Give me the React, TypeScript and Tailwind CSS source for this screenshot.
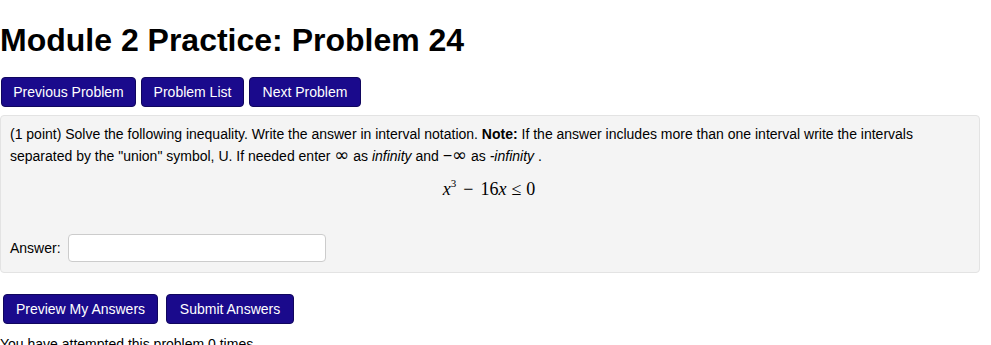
import React from "react";

const btn =
  "bg-[#1a0a8c] text-white border border-[#10065e] rounded-[4px] text-[14px] leading-none h-[30px] flex items-center justify-center";

const inf = "font-['DejaVu_Sans',sans-serif] text-[18px] leading-[0] font-normal";

export default function App() {
  return (
    <div className="w-[991px] h-[345px] overflow-hidden bg-white text-black font-['Liberation_Sans',Arial,sans-serif]">
      <h1 className="text-[32px] font-bold leading-none pt-[24px] pl-0">
        Module 2 Practice: Problem 24
      </h1>
      <div className="flex gap-[5px] mt-[21px] pl-[1px]">
        <button className={`${btn} w-[135px]`}>Previous Problem</button>
        <button className={`${btn} w-[103px]`}>Problem List</button>
        <button className={`${btn} w-[112px]`}>Next Problem</button>
      </div>
      <div className="mt-[8px] w-[980px] h-[158px] bg-[#f4f4f4] border border-[#e3e3e3] rounded-[4px] px-[9px] pt-[7px]">
        <p className="text-[14px] leading-[22px]">
          (1 point) Solve the following inequality. Write the answer in interval notation.{" "}
          <b>Note:</b> If the answer includes more than one interval write the intervals separated by the "union" symbol, U. If
          needed enter <span className={inf}>∞</span> as <i>infinity</i> and{" "}
          <span className="text-[16px] leading-[0]">−</span><span className={inf}>∞</span> as <i>-infinity</i> .
        </p>
        <div className="flex justify-center mt-[13px] pr-[2px] font-['Liberation_Serif','Times_New_Roman',serif] text-[18px] leading-none">
          <span>
            <i>x</i>
            <span className="text-[11px] relative -top-[8px]">3</span>
            <span className="mx-[7px]">−</span>16<i>x</i>
            <span className="mx-[5px]">≤</span>0
          </span>
        </div>
        <div className="flex items-center mt-[36px]">
          <span className="text-[14px] leading-none">Answer:</span>
          <input className="ml-[7px] w-[258px] h-[28px] bg-white border border-[#cccccc] rounded-[4px]" />
        </div>
      </div>
      <div className="flex gap-[8px] mt-[21px] pl-[3px]">
        <button className={`${btn} w-[155px]`}>Preview My Answers</button>
        <button className={`${btn} w-[128px]`}>Submit Answers</button>
      </div>
      <p className="text-[14px] mt-[13px] leading-none">You have attempted this problem 0 times.</p>
    </div>
  );
}
